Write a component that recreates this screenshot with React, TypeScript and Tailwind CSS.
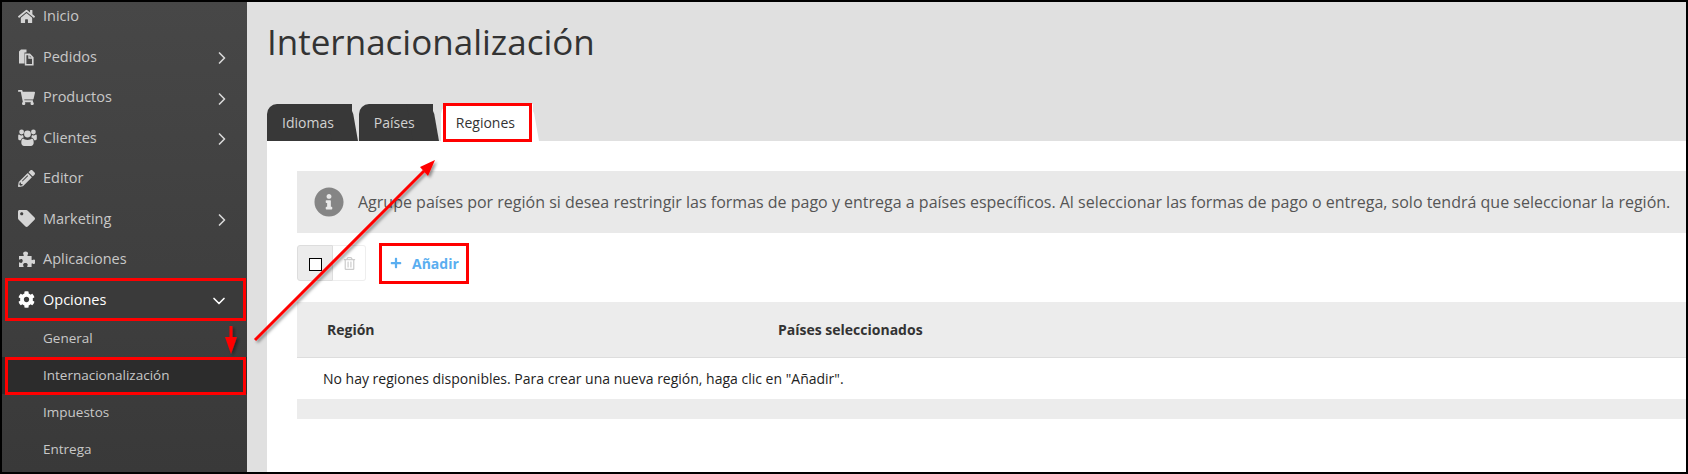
import type { ReactNode } from 'react'
import {
  FaHome,
  FaShoppingCart,
  FaPencilAlt,
  FaTag,
  FaCog,
  FaInfoCircle,
  FaRegTrashAlt,
  FaPlus,
} from 'react-icons/fa'
import { ChevronRight, ChevronDown } from 'lucide-react'

const font = { fontFamily: '"Open Sans", sans-serif' }

function FilesIcon() {
  return (
    <svg width="16" height="18" viewBox="0 0 16 18" fill="none">
      <path d="M1 3.5 3 1.5h5.5v3H6.5v11H1z" fill="currentColor" />
      <path d="M7.6 6.4h4l3.2 3.2v7.2H7.6z" stroke="currentColor" strokeWidth="1.6" />
      <path d="M11 6v4h4" stroke="currentColor" strokeWidth="1.4" />
    </svg>
  )
}

function UsersIcon() {
  return (
    <svg width="19" height="17" viewBox="0 0 19 17" fill="currentColor">
      <circle cx="9.5" cy="5" r="3.4" />
      <circle cx="3.6" cy="3" r="2.4" />
      <circle cx="15.4" cy="3" r="2.4" />
      <path d="M5 9.5c1 .9 2.6 1.4 4.5 1.4s3.500-.5 4.500-1.400c1.300.4 1.700 2.200 1.700 4.300 0 1.900-1.200 3.200-2.800 3.200H6.100c-1.600 0-2.800-1.300-2.800-3.200 0-2.100.4-3.900 1.700-4.300z" />
      <path d="M.2 6.800c0-.9.500-1.300 1-1.300.7.600 1.500.9 2.400.9.500 0 1-.1 1.400-.3.100.8.400 1.500.900 2.100-1.500.4-2.700 1.500-3 3H1.500C.6 11.200.2 10.300.2 9.200z" />
      <path d="M18.800 6.800c0-.9-.5-1.300-1-1.300-.7.600-1.500.9-2.400.9-.5 0-1-.1-1.400-.3-.1.800-.4 1.500-.9 2.100 1.500.4 2.700 1.500 3 3h1.400c.9 0 1.300-.9 1.300-2z" />
    </svg>
  )
}

function PuzzleIcon() {
  return (
    <svg width="17" height="17" viewBox="0 0 17 17" fill="currentColor">
      <path d="M1 5h4.200c.6 0 .8-.4.5-.9-.3-.5-.6-1-.6-1.600C5.100 1.200 6.200.4 7.600.4s2.500.8 2.500 2.100c0 .6-.3 1.100-.6 1.600-.3.5-.1.900.5.900h3.600v3.500c0 .6.400.8.900.5.500-.3 1-.6 1.500-.6.900 0 1.300 1 1.300 2.300s-.4 2.300-1.300 2.300c-.5 0-1-.3-1.500-.6-.5-.3-.9-.1-.9.500V16H9.600c-.5 0-.7-.4-.4-.8.300-.5.500-.9.500-1.400 0-1-1-1.700-2.300-1.700s-2.300.7-2.300 1.700c0 .5.200.9.500 1.400.3.400.1.800-.4.800H1v-4.100c0-.5.400-.7.800-.4.400.3.800.5 1.300.5 1 0 1.600-1 1.600-2.200S4.100 8 3.100 8c-.5 0-.9.200-1.300.5-.4.300-.8.100-.8-.4z" />
    </svg>
  )
}

function NavItem({ icon, label, arrow }: { icon: ReactNode; label: string; arrow?: boolean }) {
  return (
    <div className="flex h-[40.5px] items-center pl-[16px] pr-[15px] text-[14.5px] text-[#c8c8c8]">
      <span className="flex w-[25px] text-[17px] text-[#d4d4d4]">{icon}</span>
      <span className="flex-1">{label}</span>
      {arrow && <ChevronRight size={20} strokeWidth={2} className="mt-[3px] text-[#d8d8d8]" />}
    </div>
  )
}

function SubItem({ label, active }: { label: string; active?: boolean }) {
  return (
    <div className={`flex h-[37px] items-center pl-[41px] text-[13.5px] text-[#c8c8c8] ${active ? 'bg-[#2c2c2c]' : ''}`}>
      {label}
    </div>
  )
}

function Tab({ label, active }: { label: string; active?: boolean }) {
  const bg = active ? 'bg-white after:bg-white text-[#333]' : 'bg-[#383838] after:bg-[#383838] text-[#d2d2d2]'
  return (
    <div
      className={`relative z-0 flex h-[37px] items-center rounded-tl-[10px] pl-[15px] pr-[18px] text-[14px] after:absolute after:top-0 after:bottom-0 after:right-[-6px] after:z-[-1] after:w-[26px] after:origin-bottom after:skew-x-[10deg] after:rounded-tr-[10px] after:content-[''] ${bg}`}
    >
      {label}
    </div>
  )
}

export default function App() {
  return (
    <div className="relative flex h-[474px] w-[1688px] overflow-hidden border-2 border-black bg-[#e0e0e0]" style={font}>
      {/* Sidebar */}
      <aside className="w-[245px] shrink-0 overflow-hidden bg-gradient-to-b from-[#474747] to-[#393939]">
        <div className="mt-[-6px]">
          <NavItem icon={<FaHome />} label="Inicio" />
          <NavItem icon={<FilesIcon />} label="Pedidos" arrow />
          <NavItem icon={<FaShoppingCart />} label="Productos" arrow />
          <NavItem icon={<UsersIcon />} label="Clientes" arrow />
          <NavItem icon={<FaPencilAlt />} label="Editor" />
          <NavItem icon={<FaTag />} label="Marketing" arrow />
          <NavItem icon={<PuzzleIcon />} label="Aplicaciones" />
          <div className="flex h-[40.5px] items-center bg-[#3a3a3a] pl-[16px] pr-[18px] text-[14.5px] text-white">
            <span className="flex w-[25px] text-[17px]">
              <FaCog />
            </span>
            <span className="flex-1">Opciones</span>
            <ChevronDown size={20} strokeWidth={2} className="mt-[2px]" />
          </div>
          <SubItem label="General" />
          <SubItem label="Internacionalización" active />
          <SubItem label="Impuestos" />
          <SubItem label="Entrega" />
        </div>
      </aside>

      {/* Main */}
      <main className="flex min-w-0 flex-1 flex-col pl-[20px]">
        <h1 className="pt-[18px] text-[35px] leading-[44px] font-normal text-[#333]">Internacionalización</h1>
        <div className="mt-[40px] flex gap-[7px]">
          <Tab label="Idiomas" />
          <Tab label="Países" />
          <div className="ml-[1px]">
            <Tab label="Regiones" active />
          </div>
        </div>

        <div className="flex-1 bg-white pt-[30px] pl-[30px]">
          <div className="flex h-[62px] items-center bg-[#e9e9e9] pl-[17px] text-[16px] text-[#555]">
            <FaInfoCircle className="mr-[14px] text-[30px] text-[#858585]" />
            <span className="whitespace-nowrap">
              Agrupe países por región si desea restringir las formas de pago y entrega a países específicos. Al seleccionar las formas de pago o entrega, solo tendrá que seleccionar la región.
            </span>
          </div>

          <div className="mt-[12px] flex items-center">
            <div className="flex h-[36px] w-[36px] items-center justify-center rounded-l-[3px] border border-[#ddd] bg-[#ececec] pt-[2px]">
              <span className="h-[13px] w-[13px] border border-black bg-white" />
            </div>
            <div className="flex h-[36px] w-[33px] items-center justify-center rounded-r-[3px] border border-l-0 border-[#eee] bg-white text-[13px] text-[#ccc]">
              <FaRegTrashAlt />
            </div>
            <div className="ml-[24px] flex items-center gap-[10px] text-[14px] font-bold text-[#5aaef0]">
              <FaPlus className="text-[12px]" />
              Añadir
            </div>
          </div>

          <div className="mt-[21px] flex h-[56px] items-center border-b border-[#ddd] bg-[#ececec] text-[14px] font-bold text-[#333]">
            <span className="w-[481px] pl-[30px]">Región</span>
            <span>Países seleccionados</span>
          </div>
          <div className="flex h-[41px] items-center pl-[26px] text-[14px] text-[#222]">
            No hay regiones disponibles. Para crear una nueva región, haga clic en "Añadir".
          </div>
          <div className="h-[20px] bg-[#ececec]" />
        </div>
      </main>

      {/* Red annotations */}
      <div className="absolute top-[276px] left-[3px] h-[43px] w-[241px] border-[3px] border-[#ff0000]" />
      <div className="absolute top-[355px] left-[3px] h-[38px] w-[241px] border-[3px] border-[#ff0000]" />
      <div className="absolute top-[101px] left-[441px] h-[39px] w-[89px] border-[3px] border-[#ff0000]" />
      <div className="absolute top-[241px] left-[377px] h-[41px] w-[90px] border-[3px] border-[#ff0000]" />

      <svg className="pointer-events-none absolute top-[-2px] left-[-2px]" width="1688" height="474">
        <defs>
          <filter id="arrowShadow" x="-20%" y="-20%" width="140%" height="140%">
            <feDropShadow dx="2" dy="2" stdDeviation="1.5" floodColor="#000" floodOpacity="0.4" />
          </filter>
        </defs>
        <g filter="url(#arrowShadow)">
          <line x1="255" y1="340" x2="424" y2="171" stroke="#ff0000" strokeWidth="3" />
          <polygon points="435,160 420,167 428,176" fill="#ff0000" />
          <line x1="231" y1="326" x2="231" y2="344" stroke="#ff0000" strokeWidth="3" />
          <polygon points="231,354 225,337 237,337" fill="#ff0000" />
        </g>
      </svg>
    </div>
  )
}
